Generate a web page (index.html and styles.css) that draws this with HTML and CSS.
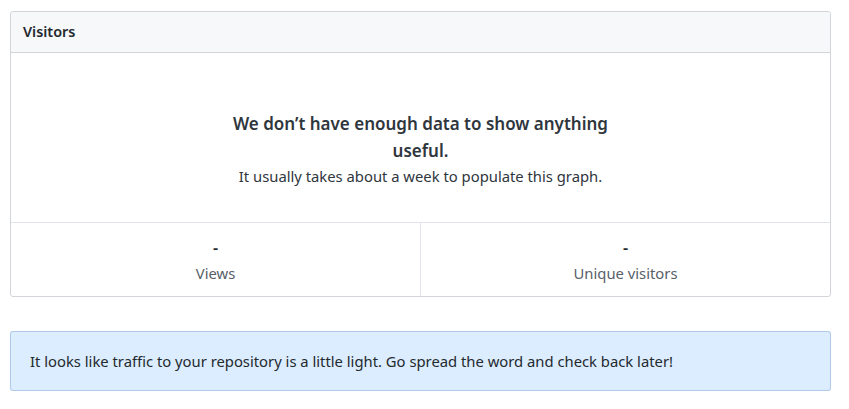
FILE: index.html
```html
<!DOCTYPE html>
<html>
<head>
<meta charset="utf-8">
<link rel="stylesheet" href="styles.css">
</head>
<body>
<div class="page">
  <div class="box">
    <div class="box-header">Visitors</div>
    <div class="blank">
      <h3 class="blank-title">We don’t have enough data to show anything useful.</h3>
      <p class="blank-text">It usually takes about a week to populate this graph.</p>
    </div>
    <div class="stats">
      <div class="stat">
        <div class="stat-num">-</div>
        <div class="stat-label">Views</div>
      </div>
      <div class="stat">
        <div class="stat-num">-</div>
        <div class="stat-label">Unique visitors</div>
      </div>
    </div>
  </div>
  <div class="flash">It looks like traffic to your repository is a little light. Go spread the word and check back later!</div>
</div>
</body>
</html>
```
FILE: styles.css
```css
* { box-sizing: border-box; }
html, body { margin: 0; padding: 0; background: #fff; }
body {
  font-family: "Noto Sans", "Open Sans", sans-serif;
  font-size: 14.8px;
  line-height: 1.5;
  color: #24292e;
}
.page {
  width: 821px;
  margin: 11px 0 0 10px;
}
.box {
  border: 1px solid #d1d5da;
  border-radius: 3px;
}
.box-header {
  background: #f6f8fa;
  border-bottom: 1px solid #d1d5da;
  border-radius: 3px 3px 0 0;
  padding: 9px 12px 10px;
  font-weight: 600;
  font-size: 14.4px;
  height: 41px;
}
.blank {
  height: 169px;
  display: flex;
  flex-direction: column;
  align-items: center;
  justify-content: center;
  text-align: center;
  padding-top: 22px;
}
.blank-title {
  margin: 0;
  max-width: 400px;
  font-size: 17px;
  font-weight: 600;
  line-height: 27px;
  color: #2f363d;
}
.blank-text {
  margin: 0;
  font-size: 14.8px;
  line-height: 24px;
  color: #2f363d;
}
.stats {
  display: flex;
  border-top: 1px solid #e1e4e8;
}
.stat {
  flex: 1;
  text-align: center;
  padding: 13px 0 10px;
}
.stat + .stat { border-left: 1px solid #e1e4e8; }
.stat-num {
  font-weight: 600;
  font-size: 16px;
  line-height: 25px;
  color: #24292e;
}
.stat-label {
  color: #586069;
  font-size: 14.8px;
  line-height: 25px;
}
.flash {
  margin-top: 34px;
  background: #dbedff;
  border: 1px solid rgba(4, 66, 137, 0.2);
  border-radius: 3px;
  padding: 19px 19px;
  height: 60px;
  font-size: 14.8px;
  line-height: 20px;
}
```
